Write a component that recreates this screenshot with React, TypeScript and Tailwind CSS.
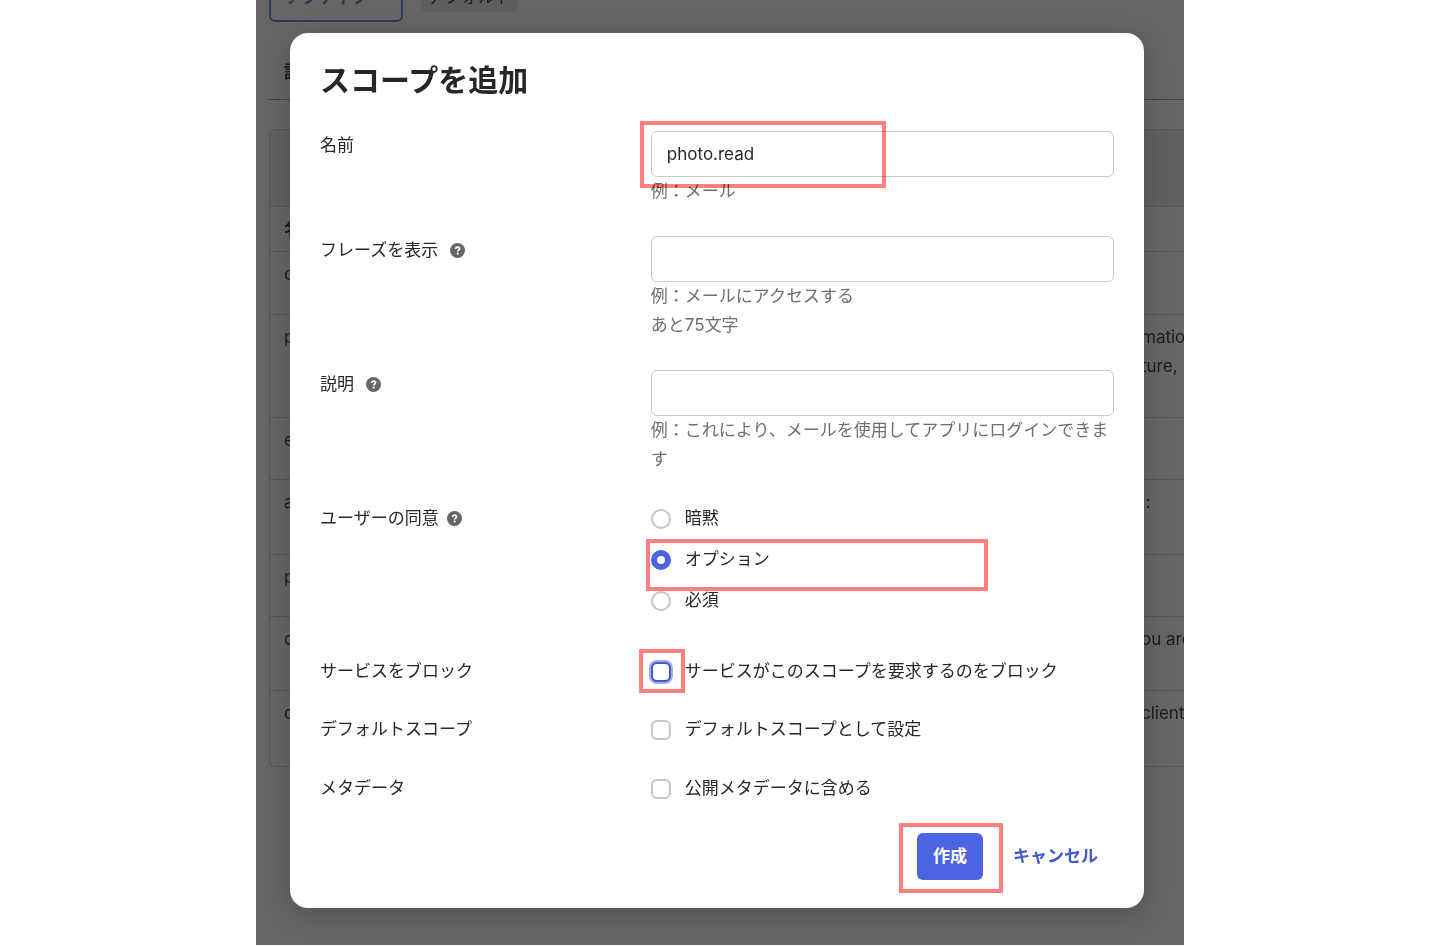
import { useState } from "react";
import type { ReactNode } from "react";

// scopes table behind the modal
const scopeRows = [
    { name: "openid", height: "h-[63px]", text: [""] },
    { name: "profile", height: "h-[103px]", text: ["mation", "ture,"] },
    { name: "email", height: "h-[62px]", text: [""] },
    { name: "address", height: "h-[75px]", text: ["\u00a0:"] },
    { name: "phone", height: "h-[62px]", text: [""] },
    { name: "offline_access", height: "h-[74px]", text: ["ou are"] },
    { name: "device_sso", height: "h-[75px]", text: ["client"] },
];

const consentOptions = ["暗黙", "オプション", "必須"];

const inputClass = "block h-[46px] w-full rounded-md border border-[#c9c9c9] bg-white px-[15px] text-[17px] text-[#272727] outline-none";
const markClass = "pointer-events-none absolute border-4 border-[#ff8080] mix-blend-multiply";

function HelpIcon() {
    return (
        <svg className="h-[15px] w-[15px] shrink-0" viewBox="0 0 16 16" aria-hidden="true">
            <circle cx="8" cy="8" r="8" fill="#666666" />
            <path d="M5.9 6.2C6 4.9 6.9 4.3 8.1 4.3c1.2 0 2.1.7 2.1 1.8 0 1.5-2 1.5-2 3" fill="none" stroke="#fff" strokeWidth="1.8" />
            <rect x="7.2" y="10.2" width="2" height="2" rx="0.6" fill="#fff" />
        </svg>
    );
}

function Row({ children, className = "" }: { children: ReactNode; className?: string }) {
    return <div className={`grid grid-cols-12 ${className}`}>{children}</div>;
}

function Check({ id, label, checked, focused, onChange }: { id: string; label: string; checked: boolean; focused?: boolean; onChange: (v: boolean) => void }) {
    return (
        <div className="relative col-span-7 flex items-center gap-[14px]">
            <input
                id={id}
                type="checkbox"
                checked={checked}
                onChange={(e) => onChange(e.target.checked)}
                className={`h-5 w-5 shrink-0 appearance-none rounded-md border-2 bg-white outline-none checked:bg-[#4c64e1] ${focused ? "border-[#4257cf] ring-2 ring-[#9facf0]" : "border-[#c6c6c6]"}`}
            />
            <label htmlFor={id}>{label}</label>
            {focused && <span className={`${markClass} -left-3 -top-2 h-[44px] w-[46px]`} />}
        </div>
    );
}

function BackgroundPage() {
    return (
        <div className="pl-[13px] text-[#4a4a4a]">
            <div className="-mt-6 flex items-center gap-[18px]">
                <button className="flex h-[46px] w-[134px] items-center justify-center gap-2 rounded-md border-2 border-[#8089d8] pb-1 font-bold text-[#8089d8]">
                    アクティブ
                    <svg className="h-[6px] w-[10px]" viewBox="0 0 10 6" aria-hidden="true"><path d="M0 0h10L5 6z" fill="currentColor" /></svg>
                </button>
                <span className="-mt-1 rounded-md bg-[#ebebeb] px-[6px]">デフォルト</span>
            </div>
            <div className="mt-[36px] h-[42px] border-b border-[#b4b4b4] px-[15px] font-bold">設定</div>
            <div className="mt-[29px] rounded-l-md border border-r-0 border-[#d9d9d9]">
                <div className="h-[76px] rounded-tl-md bg-[#f3f3f3]" />
                <table className="w-full table-fixed border-collapse text-left">
                    <thead>
                        <tr className="h-[45px] border-t border-[#d9d9d9]">
                            <th className="px-[14px] font-bold">名前</th>
                            <th className="w-[43px]" aria-label="説明" />
                        </tr>
                    </thead>
                    <tbody>
                        {scopeRows.map((row) => (
                            <tr key={row.name} className={`border-t border-[#d9d9d9] align-top ${row.height}`}>
                                <td className="px-[14px] pt-2">{row.name}</td>
                                <td className="whitespace-nowrap pt-2">
                                    {row.text.map((line) => (
                                        <div key={line}>{line}</div>
                                    ))}
                                </td>
                            </tr>
                        ))}
                    </tbody>
                </table>
            </div>
        </div>
    );
}

export default function App() {
    const [name, setName] = useState("photo.read");
    const [phrase, setPhrase] = useState("");
    const [description, setDescription] = useState("");
    const [consent, setConsent] = useState("オプション");
    const [block, setBlock] = useState(false);
    const [isDefault, setIsDefault] = useState(false);
    const [metadata, setMetadata] = useState(false);

    return (
        <div className="h-screen bg-white pb-px font-[Inter,'Noto_Sans_CJK_JP',sans-serif] text-[17px] leading-[29px] text-[#272727]">
            <div className="relative mx-auto h-full max-w-[928px] overflow-hidden bg-white">
                <BackgroundPage />
                {/* modal */}
                <div className="absolute inset-0 bg-black/60 pb-9 pl-[34px] pr-10 pt-[33px]">
                    <form role="dialog" aria-labelledby="title" onSubmit={(e) => e.preventDefault()} className="rounded-[18px] bg-white px-[30px] pb-7 pt-7 shadow-[0_6px_30px_rgba(0,0,0,0.2)]">
                        <h1 id="title" className="mb-8 text-[30px] font-bold leading-[38px]">スコープを追加</h1>

                        <Row className="mb-[30px]">
                            <label htmlFor="name" className="col-span-5">名前</label>
                            <div className="relative col-span-7">
                                <input id="name" className={inputClass} value={name} onChange={(e) => setName(e.target.value)} />
                                <p className="text-[#6e6e6e]">例：メール</p>
                                <span className={`${markClass} -left-[11px] -top-[10px] h-[67px] w-[246px]`} />
                            </div>
                        </Row>

                        <Row className="mb-[30px]">
                            <label htmlFor="phrase" className="col-span-5 flex h-[29px] items-center gap-3">フレーズを表示<HelpIcon /></label>
                            <div className="col-span-7">
                                <input id="phrase" className={inputClass} value={phrase} onChange={(e) => setPhrase(e.target.value)} />
                                <p className="text-[#6e6e6e]">例：メールにアクセスする</p>
                                <p className="text-[#6e6e6e]">あと{75 - phrase.length}文字</p>
                            </div>
                        </Row>

                        <Row className="mb-[30px]">
                            <label htmlFor="description" className="col-span-5 flex h-[29px] items-center gap-3">説明<HelpIcon /></label>
                            <div className="col-span-7">
                                <input id="description" className={inputClass} value={description} onChange={(e) => setDescription(e.target.value)} />
                                <p className="text-[#6e6e6e]">例：これにより、メールを使用してアプリにログインできます</p>
                            </div>
                        </Row>

                        <Row className="mb-[42px]">
                            <span id="consent" className="col-span-5 flex h-[29px] items-center gap-2">ユーザーの同意<HelpIcon /></span>
                            <div role="radiogroup" aria-labelledby="consent" className="col-span-7 flex flex-col gap-3">
                                {consentOptions.map((option) => (
                                    <label key={option} className="relative flex items-center gap-[14px]">
                                        <input
                                            type="radio"
                                            name="consent"
                                            checked={consent === option}
                                            onChange={() => setConsent(option)}
                                            className="h-5 w-5 shrink-0 appearance-none rounded-full border-2 border-[#c6c6c6] bg-white checked:border-[6px] checked:border-[#4c64e1]"
                                        />
                                        {option}
                                        {option === "オプション" && <span className={`${markClass} -left-[5px] -top-[6px] h-[52px] w-[342px]`} />}
                                    </label>
                                ))}
                            </div>
                        </Row>

                        <Row className="mb-[29px]">
                            <span className="col-span-5">サービスをブロック</span>
                            <Check id="block" label="サービスがこのスコープを要求するのをブロック" checked={block} onChange={setBlock} focused />
                        </Row>
                        <Row className="mb-[30px]">
                            <span className="col-span-5">デフォルトスコープ</span>
                            <Check id="default" label="デフォルトスコープとして設定" checked={isDefault} onChange={setIsDefault} />
                        </Row>
                        <Row className="mb-[30px]">
                            <span className="col-span-5">メタデータ</span>
                            <Check id="metadata" label="公開メタデータに含める" checked={metadata} onChange={setMetadata} />
                        </Row>

                        <div className="flex justify-end gap-[14px]">
                            <div className="relative">
                                <button type="submit" className="h-[47px] rounded-md bg-[#4c64e1] px-4 font-bold text-white">作成</button>
                                <span className={`${markClass} -left-[18px] -top-[10px] h-[70px] w-[104px]`} />
                            </div>
                            <button type="button" className="h-[47px] px-4 font-bold text-[#4257cf]">キャンセル</button>
                        </div>
                    </form>
                </div>
            </div>
        </div>
    );
}
